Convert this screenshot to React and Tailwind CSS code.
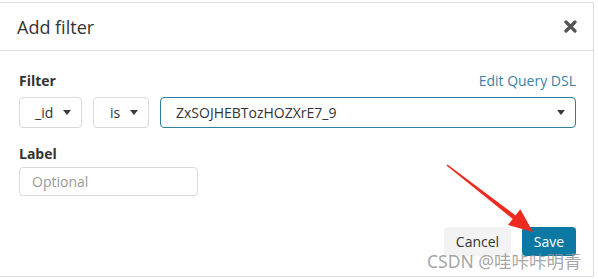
import React from "react";

function Caret() {
  return (
    <svg width="8" height="5" viewBox="0 0 8 5" className="shrink-0">
      <path d="M0 0 L8 0 L4 5 Z" fill="#3a3a3a" />
    </svg>
  );
}

function SelectBox({ value, className }) {
  return (
    <div className={`flex h-[31px] items-center justify-between rounded-[4px] border bg-white text-[14px] text-[#333] ${className}`}>
      <span>{value}</span>
      <Caret />
    </div>
  );
}

export default function App() {
  return (
    <div className="relative h-[279px] w-[598px] bg-white pt-[2px] font-['Open_Sans',sans-serif]">
      <div className="flex h-[275px] w-[594px] flex-col border-y border-r border-[#dcdcdc] bg-white">
        {/* header */}
        <div className="flex h-[48px] shrink-0 items-center justify-between border-b border-[#dcdcdc] pl-[17px] pr-[16px]">
          <h2 className="pt-[2px] text-[18px] text-[#333]">Add filter</h2>
          <svg width="13" height="13" viewBox="0 0 13 13">
            <path d="M2 2 L11 11 M11 2 L2 11" stroke="#555" strokeWidth="3.2" strokeLinecap="round" />
          </svg>
        </div>

        {/* body */}
        <div className="flex flex-1 flex-col pl-[19px] pr-[17px] pt-[19px]">
          <div className="flex h-[20px] items-center justify-between">
            <span className="text-[14px] font-bold text-[#333]">Filter</span>
            <span className="text-[14px] text-[#3a82a6]">Edit Query DSL</span>
          </div>
          <div className="mt-[7px] flex gap-[11px]">
            <SelectBox value="_id" className="w-[63px] border-[#d9d9d9] pl-[15px] pr-[10px]" />
            <SelectBox value="is" className="w-[56px] border-[#d9d9d9] pl-[16px] pr-[10px]" />
            <SelectBox value="ZxSOJHEBTozHOZXrE7_9" className="flex-1 border-[#2f7e9d] pl-[15px] pr-[10px]" />
          </div>
          <span className="mt-[16px] h-[20px] text-[14px] font-bold leading-[20px] text-[#333]">Label</span>
          <div className="mt-[3px] flex h-[29px] w-[179px] items-center rounded-[4px] border border-[#d9d9d9] pl-[12px] text-[14px] text-[#999]">
            Optional
          </div>
          <div className="mt-auto mb-[20px] flex justify-end gap-[11px]">
            <button className="h-[29px] w-[67px] rounded-[4px] bg-[#f3f3f3] text-[14px] text-[#333]">Cancel</button>
            <button className="h-[29px] w-[54px] rounded-[4px] bg-[#0b79a3] text-[14px] text-white">Save</button>
          </div>
        </div>
      </div>

      {/* annotation arrow */}
      <svg className="absolute left-0 top-0" width="598" height="279" viewBox="0 0 598 279">
        <polygon
          points="447.5,164.4 515.5,215.5 520.3,209.3 533,232 508,225.1 512.7,218.9 446.5,165.6"
          fill="#ec2a20"
        />
      </svg>

      {/* watermark */}
      <span
        className="absolute left-[427px] top-[250px] text-[17.5px] leading-[22px] text-[#8e8e8e]/80"
        style={{ fontFamily: '"Noto Sans", "Noto Sans CJK SC", sans-serif' }}
      >
        CSDN @哇咔咔明青
      </span>
    </div>
  );
}
